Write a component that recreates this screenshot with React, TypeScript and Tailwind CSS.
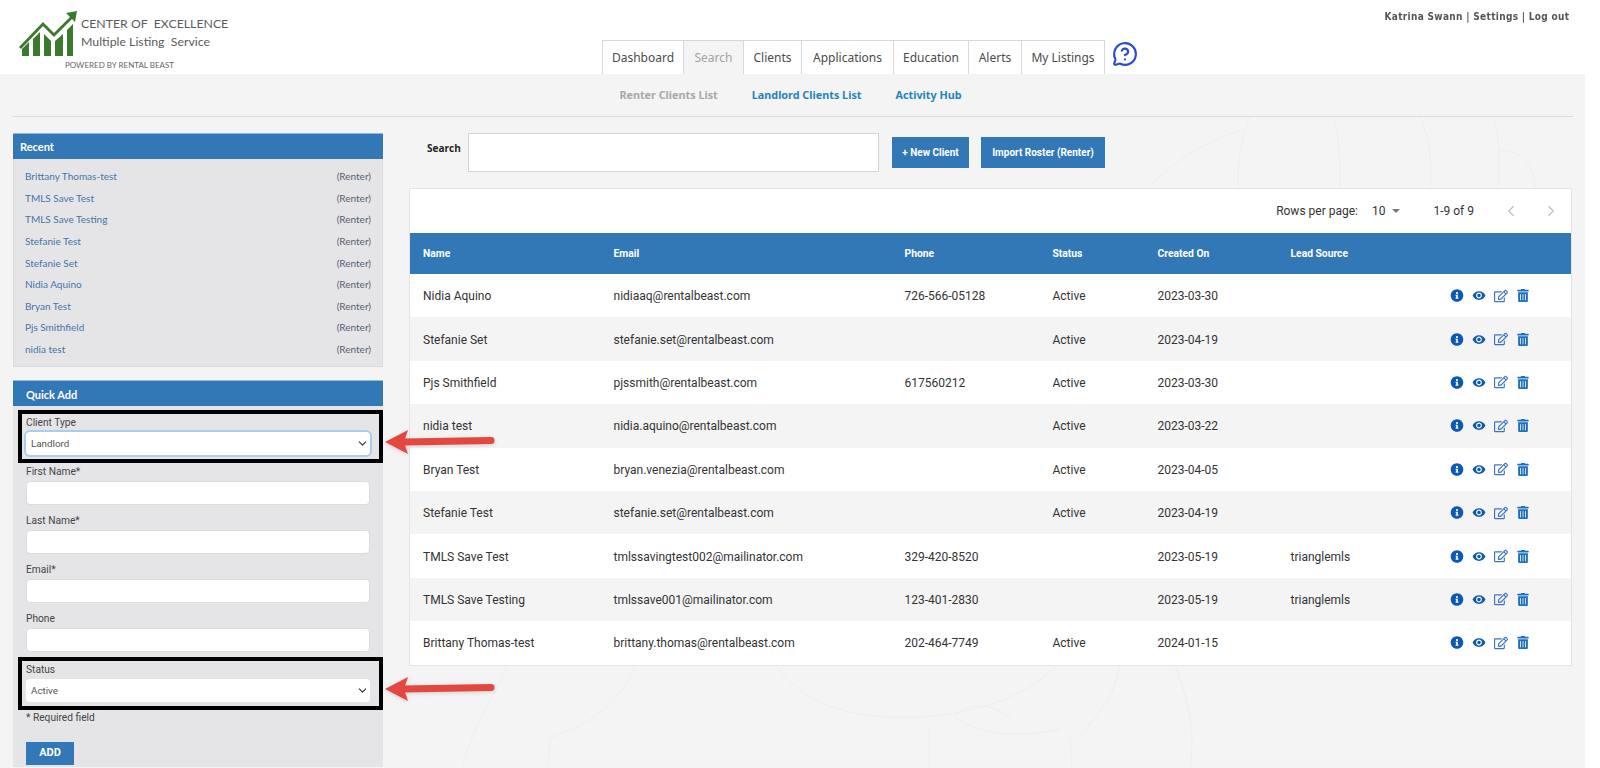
import { ChevronDown, ChevronLeft, ChevronRight, MessageCircleQuestion } from "lucide-react";
import { FaInfoCircle, FaRegEdit, FaTrashAlt } from "react-icons/fa";
import { MdRemoveRedEye } from "react-icons/md";

const tabs = [
  { label: "Dashboard", width: "w-[81px]" },
  { label: "Search", width: "w-[60px]", active: true },
  { label: "Clients", width: "w-[58px]" },
  { label: "Applications", width: "w-[92px]" },
  { label: "Education", width: "w-[75px]" },
  { label: "Alerts", width: "w-[53px]" },
  { label: "My Listings", width: "w-[84px]" },
];

const recent = [
  "Brittany Thomas-test",
  "TMLS Save Test",
  "TMLS Save Testing",
  "Stefanie Test",
  "Stefanie Set",
  "Nidia Aquino",
  "Bryan Test",
  "Pjs Smithfield",
  "nidia test",
];

const clients = [
  ["Nidia Aquino", "nidiaaq@rentalbeast.com", "726-566-05128", "Active", "2023-03-30", ""],
  ["Stefanie Set", "stefanie.set@rentalbeast.com", "", "Active", "2023-04-19", ""],
  ["Pjs Smithfield", "pjssmith@rentalbeast.com", "617560212", "Active", "2023-03-30", ""],
  ["nidia test", "nidia.aquino@rentalbeast.com", "", "Active", "2023-03-22", ""],
  ["Bryan Test", "bryan.venezia@rentalbeast.com", "", "Active", "2023-04-05", ""],
  ["Stefanie Test", "stefanie.set@rentalbeast.com", "", "Active", "2023-04-19", ""],
  ["TMLS Save Test", "tmlssavingtest002@mailinator.com", "329-420-8520", "", "2023-05-19", "trianglemls"],
  ["TMLS Save Testing", "tmlssave001@mailinator.com", "123-401-2830", "", "2023-05-19", "trianglemls"],
  ["Brittany Thomas-test", "brittany.thomas@rentalbeast.com", "202-464-7749", "Active", "2024-01-15", ""],
];

const columns = "grid grid-cols-[190.5px_291px_148px_105px_133px_159px_1fr] items-center px-[13px]";

const Logo = () => (
  <svg width="60" height="48" viewBox="0 0 60 48" className="shrink-0">
    <g fill="#3a7a2c">
      <polygon points="3,46 3,39 10,32 10,46" />
      <polygon points="14,46 14,29 21,22 21,46" />
      <polygon points="25,46 25,24 32,31 32,46" />
      <polygon points="36,46 36,31 44,24 44,46" />
      <polygon points="48,46 48,20 54,14 54,46" />
      <polygon points="0,37 24,12 35,23 51,7 47,3 58,1 56,12 53,9 35,27 24,16 2,39" />
    </g>
  </svg>
);

const Arrow = ({ className }: { className: string }) => (
  <svg width="112" height="28" viewBox="0 0 112 28" className={`absolute drop-shadow-sm ${className}`}>
    <polygon points="1,14 24,2 20,14 24,26" fill="#e2483f" />
    <line x1="20" y1="14" x2="107" y2="12.5" stroke="#e2483f" strokeWidth="7" strokeLinecap="round" />
  </svg>
);

const Field = ({ label }: { label: string }) => (
  <div className="mt-[7px] pl-[13px] pr-[13px] h-[42px]">
    <div className="h-[17px] text-[10.2px] leading-[15px] text-[#444]">{label}</div>
    <div className="h-[24px] bg-white rounded border border-[#dcdcdf]" />
  </div>
);

const SelectBox = ({ label, value, focused }: { label: string; value: string; focused?: boolean }) => (
  <div className="ml-[5px] h-[53px] border-4 border-black pl-1 pr-[9px]">
    <div className="h-[18px] pt-[2px] text-[10.2px] leading-[14px] text-[#444]">{label}</div>
    <div
      className={`h-[23px] bg-white rounded flex items-center justify-between pl-[5px] pr-[1px] text-[9.8px] text-[#555] ${
        focused ? "ring-2 ring-[#a9cdf0]" : ""
      }`}
    >
      <span className="pt-[2px]">{value}</span>
      <ChevronDown size={13} strokeWidth={2} className="text-[#333]" />
    </div>
  </div>
);

const RowActions = () => (
  <div className="flex items-center gap-2 text-[#0b5ab0]">
    <FaInfoCircle size={13} className="w-[14px]" />
    <MdRemoveRedEye size={15} className="w-[14px]" />
    <FaRegEdit size={14} className="w-[14px] text-[#3f74bd]" />
    <FaTrashAlt size={13} className="w-[14px] text-[#1c70c0]" />
  </div>
);

export default function App() {
  return (
    <div className="relative h-[768px] w-[1600px] overflow-hidden bg-white font-['Roboto',sans-serif]">
      <header className="relative h-[74px] w-full">
        <div className="absolute left-[19px] top-[10px] flex">
          <Logo />
          <div className="ml-[2px] pt-[4px] font-['Lato',sans-serif] text-[#5b5b5b] whitespace-pre">
            <div className="text-[12.3px] leading-[19px]">CENTER OF  EXCELLENCE</div>
            <div className="text-[12.3px] leading-[18px]">Multiple Listing  Service</div>
          </div>
        </div>
        <div className="absolute left-[65px] top-[60px] font-['Lato',sans-serif] text-[8px] leading-[10px] text-[#666]">
          POWERED BY RENTAL BEAST
        </div>
        <div className="absolute right-[31px] top-[9px] text-[10px] font-bold tracking-[0.35px] text-[#555] font-['DejaVu_Sans',sans-serif] scale-x-90 origin-right whitespace-nowrap">
          Katrina Swann | Settings | Log out
        </div>
        <nav className="absolute left-[602px] top-[40px] flex h-[34px] items-stretch">
          {tabs.map((tab) => (
            <div
              key={tab.label}
              className={`${tab.width} flex items-center justify-center border-l border-t border-[#d8d8d8] font-['Noto_Sans',sans-serif] text-[12px] last:border-r ${
                tab.active ? "bg-[#f4f4f5] text-[#a3a3a3]" : "bg-white text-[#4b4b4b]"
              }`}
            >
              {tab.label}
            </div>
          ))}
        </nav>
        <MessageCircleQuestion size={26} strokeWidth={2} className="absolute left-[1112px] top-[41px] text-[#2a4bd0]" />
      </header>

      <main className="relative h-[694px] w-[1585px] bg-[#f4f4f5]">
        <svg
          width="1585"
          height="694"
          viewBox="0 0 1585 694"
          fill="none"
          stroke="#eeeeef"
          strokeWidth="1"
          className="absolute inset-0"
        >
          <path d="M1150 113 C1175 85 1210 65 1243 56 M1250 43 C1240 65 1238 90 1238 114" />
          <path d="M1333 43 C1340 65 1340 90 1340 114 M1420 43 C1430 65 1432 90 1430 114" />
          <path d="M1493 43 C1500 65 1500 90 1498 114 M1500 76 C1515 76 1535 85 1535 114" />
          <path d="M776 591 C810 640 870 645 920 643 C980 640 1030 620 1057 591" />
          <path d="M508 591 C495 620 470 660 462 694 M636 591 C620 630 590 650 550 664 M550 664 L548 694" />
          <path d="M1120 591 C1115 620 1100 640 1080 661 M1175 591 C1190 630 1195 660 1190 694" />
          <path d="M955 643 C970 625 1000 630 1015 650 M955 643 C975 660 1020 665 1060 655" />
          <path d="M929 651 L929 694 M1070 660 L1072 694" />
        </svg>

        <div className="relative flex h-[43px] items-center justify-center border-b border-[#dcdcdc] mx-[12px] w-[1561px]">
          <div className="flex gap-[34px] font-['Noto_Sans',sans-serif] text-[10.8px] font-bold pt-[1px] pr-[4px]">
            <span className="text-[#a8a8a8]">Renter Clients List</span>
            <span className="text-[#1f86b8]">Landlord Clients List</span>
            <span className="text-[#1f86b8]">Activity Hub</span>
          </div>
        </div>

        <div className="relative flex items-start pt-[16px] pl-[13px]">
          <aside className="h-[635px] w-[370px] shrink-0 font-['Lato',sans-serif]">
            <div className="h-[26px] bg-[#3277b6] pl-[7px] text-[11px] font-bold leading-[25px] text-white border-t border-[#8fbbe0]">
              Recent
            </div>
            <div className="h-[208px] bg-[#e5e5e8] border-x border-b border-[#dcdcdf] pl-[11px] pr-[11px] pt-[7px]">
              {recent.map((name) => (
                <div key={name} className="flex h-[21.6px] items-center justify-between text-[10px]">
                  <span className="text-[#4475a8]">{name}</span>
                  <span className="text-[#5a6270]">(Renter)</span>
                </div>
              ))}
            </div>

            <div className="mt-[13px] h-[26px] bg-[#3277b6] pl-[13px] text-[11px] font-bold leading-[28px] text-white border-t border-[#8fbbe0]">
              Quick Add
            </div>
            <div className="h-[361px] bg-[#e5e5e8] pt-[4px] font-['Roboto',sans-serif]">
              <SelectBox label="Client Type" value="Landlord" focused />
              <div className="-mt-[6px]">
                <Field label="First Name*" />
                <Field label="Last Name*" />
                <Field label="Email*" />
                <Field label="Phone" />
              </div>
              <div className="mt-[4px]">
                <SelectBox label="Status" value="Active" />
              </div>
              <div className="mt-[1px] pl-[13px] text-[10.2px] leading-[14px] text-[#444]">* Required field</div>
              <div className="ml-[13px] mt-[17px] flex h-[23px] w-[48px] items-center justify-center bg-[#3277b6] text-[11px] font-bold text-white">
                ADD
              </div>
            </div>
          </aside>

          <section className="ml-[27px] w-[1162px]">
            <div className="flex h-[58px] items-start">
              <span className="w-[58px] pl-[17px] pt-[8px] text-[10px] font-bold text-[#222] font-['Open_Sans',sans-serif] shrink-0">
                Search
              </span>
              <div className="h-[39px] w-[411px] bg-white border border-[#d4d4d4]" />
              <div className="ml-[13px] mt-[4px] flex h-[31px] w-[77px] items-center justify-center bg-[#3277b6] text-[10px] font-bold text-white">
                + New Client
              </div>
              <div className="ml-[12px] mt-[4px] flex h-[31px] w-[124px] items-center justify-center bg-[#3277b6] text-[10px] font-bold text-white">
                Import Roster (Renter)
              </div>
            </div>

            <div className="bg-white border border-[#e4e4e4] w-[1163px] -ml-[1px] mt-[-3px]">
              <div className="relative flex h-[44px] items-center justify-end text-[12px] text-[#333]">
                <span>Rows per page:</span>
                <span className="ml-[14px]">10</span>
                <span className="ml-[7px] h-0 w-0 border-x-[4px] border-t-[4px] border-x-transparent border-t-[#777]" />
                <span className="ml-[33px]">1-9 of 9</span>
                <ChevronLeft size={18} strokeWidth={1.5} className="ml-[28px] text-[#bdbdbd]" />
                <ChevronRight size={18} strokeWidth={1.5} className="ml-[22px] mr-[11px] text-[#bdbdbd]" />
              </div>
              <div className={`${columns} h-[41px] bg-[#3277b6] text-[10.3px] font-bold text-white`}>
                <span>Name</span>
                <span>Email</span>
                <span>Phone</span>
                <span>Status</span>
                <span>Created On</span>
                <span>Lead Source</span>
                <span />
              </div>
              {clients.map((row, i) => (
                <div
                  key={row[1] + i}
                  className={`${columns} h-[43.4px] text-[12px] text-[#333] ${i % 2 === 1 ? "bg-[#f4f4f4]" : "bg-white"}`}
                >
                  {row.map((value, j) => (
                    <span key={j} className="whitespace-nowrap pt-[1px]">
                      {value}
                    </span>
                  ))}
                  <RowActions />
                </div>
              ))}
            </div>
          </section>
        </div>

        <Arrow className="left-[384px] top-[354px]" />
        <Arrow className="left-[384px] top-[601px]" />
      </main>
    </div>
  );
}
